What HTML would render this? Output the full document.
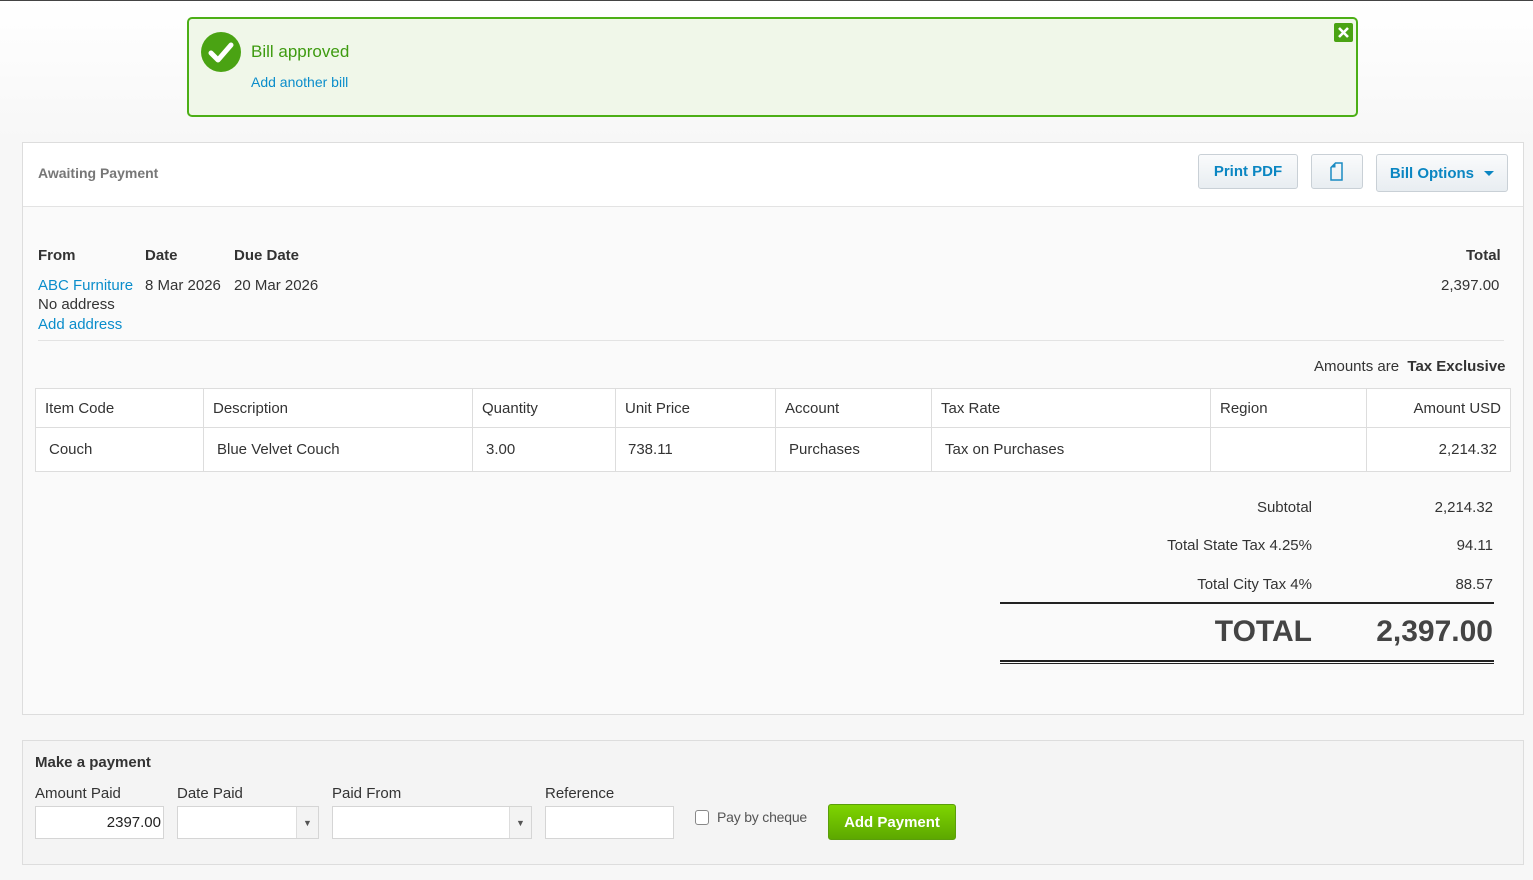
<!DOCTYPE html>
<html><head><style>
*{margin:0;padding:0;box-sizing:border-box}
body{width:1533px;height:880px;position:relative;overflow:hidden;font-family:"Liberation Sans",sans-serif;color:#333;font-size:15px;background:linear-gradient(#fff 0,#f7f7f7 140px,#f7f7f7 100%)}
.a{position:absolute;white-space:nowrap}
.lnk{color:#0a8dcb}
.btn{position:absolute;border:1px solid #c9d0d6;border-radius:3px;background:linear-gradient(#fafbfc,#e8edf1);color:#0b86c2;font-weight:bold;font-size:15px;text-align:center}
.tbl{position:absolute;left:35px;top:388px;width:1476px;border-collapse:collapse;background:#fff}
.tbl td{border:1px solid #ddd;font-size:15px;color:#333;padding:0 9px}
.r1 td{height:39px}.r2 td{height:44px}
.inp{position:absolute;top:806px;height:33px;background:#fff;border:1px solid #d5d5d5}
.dd{position:absolute;right:0;top:0;width:22px;height:31px;border-left:1px solid #ddd;background:#f3f3f3;font-size:9px;color:#555;text-align:center;line-height:33px}
</style></head><body>
<div class="a" style="left:0;top:0;width:1533px;height:1px;background:#444"></div>
<div class="a" style="left:187px;top:17px;width:1171px;height:100px;background:#f0f7e9;border:2px solid #4caf16;border-radius:5px"></div>
<svg class="a" style="left:200px;top:31px" width="42" height="42"><circle cx="21" cy="21" r="20" fill="#4aa313"/><path d="M11 22 L18 29 L31 14" stroke="#fff" stroke-width="5" fill="none" stroke-linecap="round" stroke-linejoin="round"/></svg>
<div class="a" style="left:251px;top:42px;font-size:17px;color:#3e9b10">Bill approved</div>
<div class="a lnk" style="left:251px;top:74px;font-size:14px">Add another bill</div>
<div class="a" style="left:1334px;top:23px;width:19px;height:19px;background:#4aa313;border-radius:2px"><svg width="19" height="19"><path d="M5 5L14 14M14 5L5 14" stroke="#fff" stroke-width="2.6"/></svg></div>

<div class="a" style="left:22px;top:142px;width:1502px;height:573px;border:1px solid #ddd;background:#fafafa"></div>
<div class="a" style="left:23px;top:143px;width:1500px;height:64px;background:#fff;border-bottom:1px solid #e3e3e3"></div>
<div class="a" style="left:38px;top:165px;font-weight:bold;color:#777;font-size:14px">Awaiting Payment</div>
<div class="btn" style="left:1198px;top:154px;width:100px;height:35px;line-height:33px">Print PDF</div>
<div class="btn" style="left:1311px;top:154px;width:52px;height:35px"><svg width="50" height="33"><path d="M19 12.5L23.5 8H30V25H19Z" stroke="#1a8bc3" stroke-width="1.5" fill="none"/><path d="M19 12.5H23.5V8Z" fill="#1a8bc3"/></svg></div>
<div class="btn" style="left:1376px;top:154px;width:132px;height:38px;line-height:38px">Bill Options <span style="display:inline-block;border:5px solid transparent;border-top-color:#0b86c2;vertical-align:-3px;margin-left:6px"></span></div>

<div class="a" style="left:38px;top:247px;font-weight:bold">From</div>
<div class="a" style="left:145px;top:247px;font-weight:bold">Date</div>
<div class="a" style="left:234px;top:247px;font-weight:bold">Due Date</div>
<div class="a" style="left:1466px;top:247px;font-weight:bold">Total</div>
<div class="a lnk" style="left:38px;top:277px">ABC Furniture</div>
<div class="a" style="left:145px;top:277px">8 Mar 2026</div>
<div class="a" style="left:234px;top:277px">20 Mar 2026</div>
<div class="a" style="left:1441px;top:277px">2,397.00</div>
<div class="a" style="left:38px;top:296px">No address</div>
<div class="a lnk" style="left:38px;top:316px">Add address</div>
<div class="a" style="left:38px;top:340px;width:1466px;height:1px;background:#e3e3e3"></div>
<div class="a" style="left:1314px;top:358px">Amounts are &nbsp;<b>Tax Exclusive</b></div>

<table class="tbl">
<tr class="r1"><td style="width:168px">Item Code</td><td style="width:269px">Description</td><td style="width:143px">Quantity</td><td style="width:160px">Unit Price</td><td style="width:156px">Account</td><td style="width:279px">Tax Rate</td><td style="width:156px">Region</td><td style="text-align:right">Amount USD</td></tr>
<tr class="r2"><td style="padding-left:13px">Couch</td><td style="padding-left:13px">Blue Velvet Couch</td><td style="padding-left:13px">3.00</td><td style="padding-left:12px">738.11</td><td style="padding-left:13px">Purchases</td><td style="padding-left:13px">Tax on Purchases</td><td></td><td style="text-align:right;padding-right:13px">2,214.32</td></tr>
</table>

<div class="a" style="right:221px;top:499px">Subtotal</div>
<div class="a" style="right:40px;top:499px">2,214.32</div>
<div class="a" style="right:221px;top:537px">Total State Tax 4.25%</div>
<div class="a" style="right:40px;top:537px">94.11</div>
<div class="a" style="right:221px;top:576px">Total City Tax 4%</div>
<div class="a" style="right:40px;top:576px">88.57</div>
<div class="a" style="left:1000px;top:602px;width:494px;height:2px;background:#222"></div>
<div class="a" style="right:221px;top:615px;font-size:30px;font-weight:bold;color:#444">TOTAL</div>
<div class="a" style="right:40px;top:615px;font-size:30px;font-weight:bold;color:#444">2,397.00</div>
<div class="a" style="left:1000px;top:660px;width:494px;height:4px;border-top:2px solid #222;border-bottom:1px solid #222"></div>

<div class="a" style="left:22px;top:740px;width:1502px;height:125px;border:1px solid #ddd;background:#f4f4f4"></div>
<div class="a" style="left:35px;top:754px;font-weight:bold;font-size:15px">Make a payment</div>
<div class="a" style="left:35px;top:785px">Amount Paid</div>
<div class="a" style="left:177px;top:785px">Date Paid</div>
<div class="a" style="left:332px;top:785px">Paid From</div>
<div class="a" style="left:545px;top:785px">Reference</div>
<div class="inp" style="left:35px;width:129px;text-align:right;padding-right:2px;line-height:32px;color:#222">2397.00</div>
<div class="inp" style="left:177px;width:142px"><div class="dd">▼</div></div>
<div class="inp" style="left:332px;width:200px"><div class="dd">▼</div></div>
<div class="inp" style="left:545px;width:129px"></div>
<div class="a" style="left:695px;top:810px;width:14px;height:15px;border:1px solid #888;border-radius:3px;background:#fff"></div>
<div class="a" style="left:717px;top:809px;font-size:14px;color:#555;letter-spacing:-0.2px">Pay by cheque</div>
<div class="a" style="left:828px;top:804px;width:128px;height:36px;border-radius:3px;background:linear-gradient(#7ed400,#5da800);border:1px solid #5a9e0a;color:#fff;font-weight:bold;text-align:center;line-height:35px">Add Payment</div>
</body></html>
